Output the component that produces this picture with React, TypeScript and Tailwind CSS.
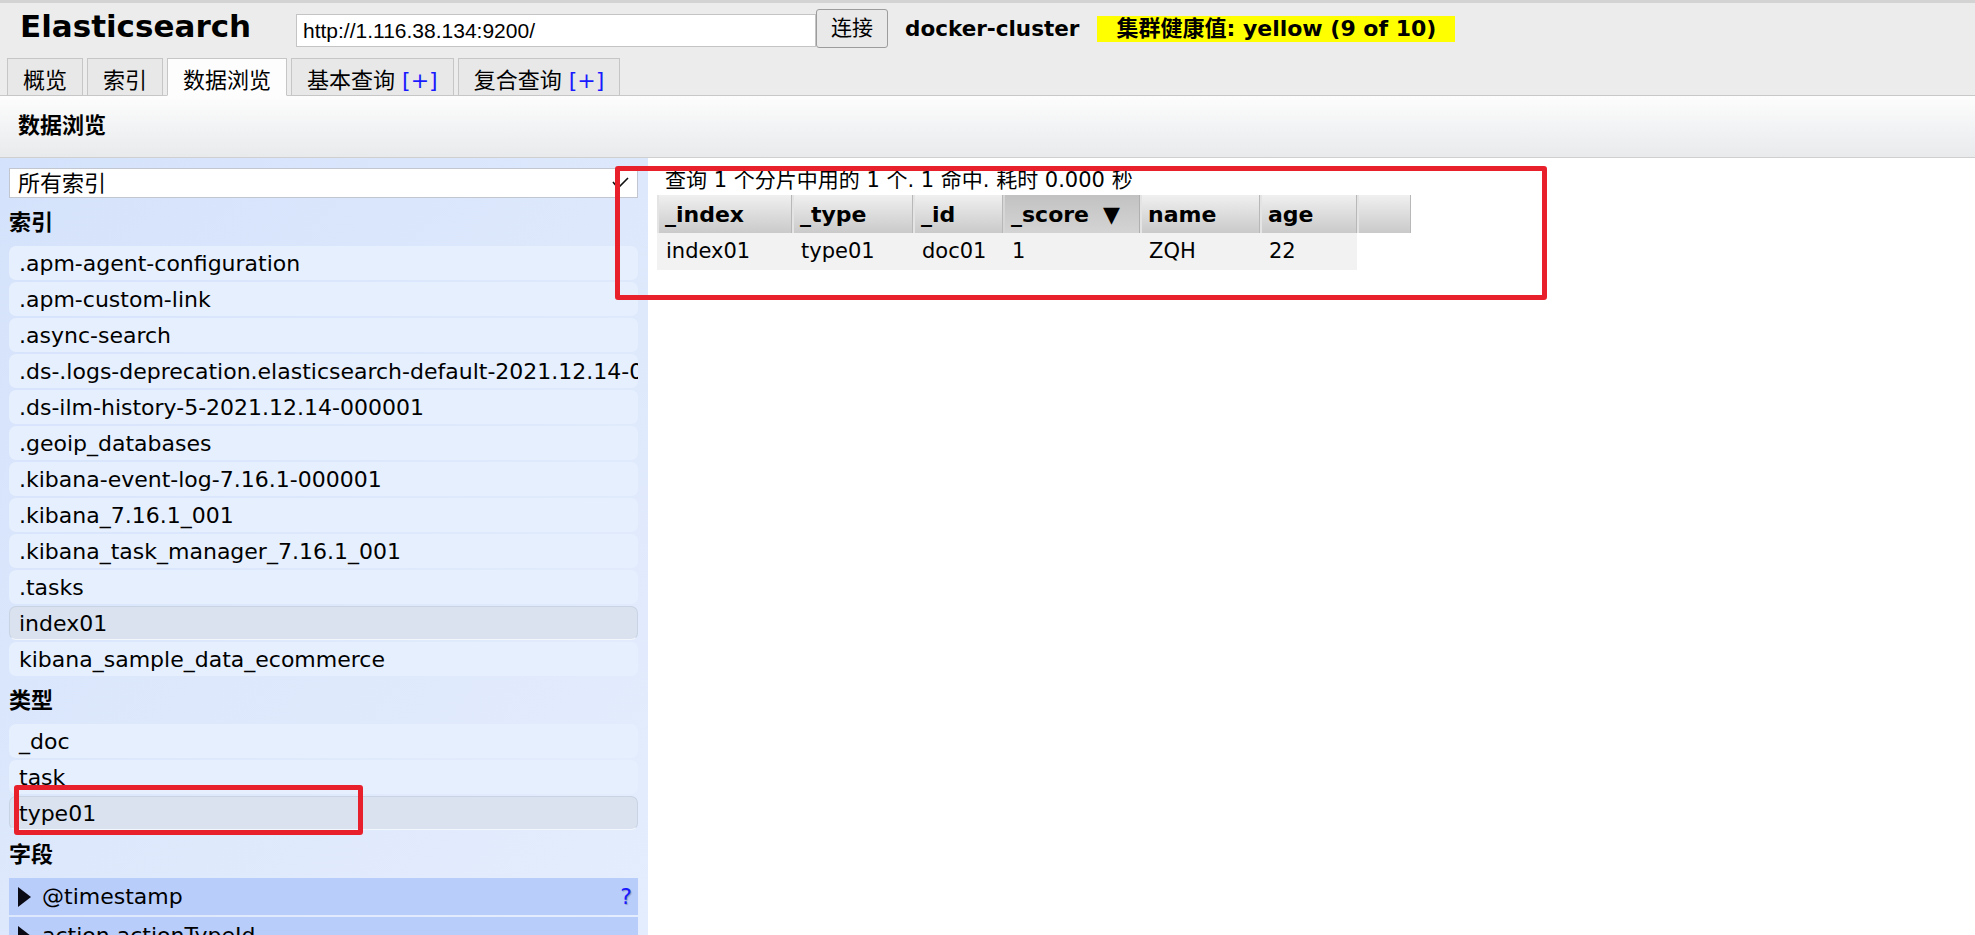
import React from "react";

const indices = [
  ".apm-agent-configuration",
  ".apm-custom-link",
  ".async-search",
  ".ds-.logs-deprecation.elasticsearch-default-2021.12.14-000001",
  ".ds-ilm-history-5-2021.12.14-000001",
  ".geoip_databases",
  ".kibana-event-log-7.16.1-000001",
  ".kibana_7.16.1_001",
  ".kibana_task_manager_7.16.1_001",
  ".tasks",
  "index01",
  "kibana_sample_data_ecommerce",
];

const types = ["_doc", "task", "type01"];

function Item({ label, selected }: { label: string; selected?: boolean }) {
  return (
    <div
      className={
        selected
          ? "h-[34px] shrink-0 rounded-[7px] bg-[#d9e2ee] border border-[#c8d3e3] border-b-[#f2f6fd] pl-[9px] flex items-center text-[22px] whitespace-nowrap overflow-hidden"
          : "h-[34px] shrink-0 rounded-[7px] bg-[#e6effd] pl-[10px] flex items-center text-[22px] whitespace-nowrap overflow-hidden"
      }
    >
      {label}
    </div>
  );
}

function Heading({ label }: { label: string }) {
  return <div className="h-[44px] shrink-0 flex items-center text-[22px] font-bold">{label}</div>;
}

function Field({ label, help }: { label: string; help?: boolean }) {
  return (
    <div className="h-[37px] shrink-0 bg-[#b9cdfb] flex items-center pl-[9px] pr-[6px]">
      <svg width="13" height="20" viewBox="0 0 13 20" className="shrink-0">
        <polygon points="0,0 13,10 0,20" fill="#0a0a14" />
      </svg>
      <span className="ml-[11px] text-[22px] whitespace-nowrap">{label}</span>
      {help && (
        <span className="ml-auto text-[22px] text-[#1a1aff] [text-shadow:1px_1px_1px_#8a9ac0]">?</span>
      )}
    </div>
  );
}

function Tab({ children, active }: { children: React.ReactNode; active?: boolean }) {
  return (
    <div
      className={
        active
          ? "h-[38px] -mb-px px-[15px] pt-[8px] leading-[28px] border border-[#c6c6c6] border-b-[#fdfdfd] bg-[#fdfdfd] text-[22px] whitespace-nowrap"
          : "h-[38px] -mb-px px-[15px] pt-[8px] leading-[28px] border border-[#c6c6c6] bg-[#e8e8e8] text-[22px] whitespace-nowrap"
      }
    >
      {children}
    </div>
  );
}

const headCell =
  "h-[38px] flex items-center pl-[6px] border-l-2 border-l-[#e4e4e4] border-r border-r-[#b8b8b8] bg-linear-to-b from-[#f0f0f0] to-[#cacaca] font-bold text-[22px] whitespace-nowrap";
const headCellSorted =
  "h-[38px] flex items-center pl-[6px] border-l-2 border-l-[#d6d6d6] border-r border-r-[#b0b0b0] bg-linear-to-b from-[#c2c2c2] to-[#d4d4d4] font-bold text-[22px] whitespace-nowrap";
const rowCell = "h-[37px] flex items-center pl-[9px] bg-[#f2f2f2] text-[21px] whitespace-nowrap";

export default function App() {
  return (
    <div className="relative w-full h-[935px] overflow-hidden bg-white text-black font-['DejaVu_Sans','Noto_Sans_CJK_SC',sans-serif]">
      {/* Header */}
      <div className="bg-[#ececec] border-t-[3px] border-[#d3d3d3]">
        <div className="flex h-[55px]">
          <div className="w-[296px] shrink-0 pl-[20px] mt-[5px] text-[31px] font-bold leading-[36px]">
            Elasticsearch
          </div>
          <div className="mt-[11px] w-[520px] h-[33px] shrink-0 border border-[#c4c4c4] bg-white pl-[6px] flex items-center font-['Liberation_Sans','Noto_Sans_CJK_SC',sans-serif] text-[21px]">
            http://1.116.38.134:9200/
          </div>
          <div className="mt-[6px] w-[72px] h-[39px] shrink-0 border border-[#9c9c9c] rounded-[3px] bg-[#e9e9e9] flex items-center justify-center text-[21px]">
            连接
          </div>
          <div className="ml-[17px] mt-[13px] h-[26px] leading-[26px] text-[21.5px] font-bold whitespace-nowrap">
            docker-cluster
          </div>
          <div className="ml-[18px] mt-[13px] h-[26px] leading-[26px] px-[19px] bg-[#ffff00] text-[22px] font-bold whitespace-nowrap">
            集群健康值: yellow (9 of 10)
          </div>
        </div>
        <div className="flex items-end gap-[4px] pl-[7px] h-[38px] border-b border-[#c8c8c8]">
          <Tab>概览</Tab>
          <Tab>索引</Tab>
          <Tab active>数据浏览</Tab>
          <Tab>
            基本查询 <span className="text-[#1a1aff]">[+]</span>
          </Tab>
          <Tab>
            复合查询 <span className="text-[#1a1aff]">[+]</span>
          </Tab>
        </div>
      </div>

      {/* Panel title bar */}
      <div className="h-[62px] border-b border-[#cfcfcf] bg-linear-to-b from-[#fdfdfd] to-[#e8eaec] flex items-center pl-[18px] pb-[2px] text-[22px] font-bold">
        数据浏览
      </div>

      {/* Main */}
      <div className="flex h-[777px]">
        <div className="w-[648px] shrink-0 bg-linear-to-br from-[#d4e2fb] via-[#dde8fc] to-[#e4edfd] pt-[10px] pl-[9px] pr-[10px] flex flex-col gap-[2px] overflow-hidden">
          <div className="h-[30px] shrink-0 border border-[#c2c7cf] bg-white flex items-center pl-[8px] pr-[8px] text-[22px]">
            <span>所有索引</span>
            <svg width="17" height="13" viewBox="0 0 17 13" className="ml-auto">
              <polyline points="1,5 6,11 16,1" fill="none" stroke="#111" strokeWidth="1.6" />
            </svg>
          </div>
          <Heading label="索引" />
          {indices.map((n) => (
            <Item key={n} label={n} selected={n === "index01"} />
          ))}
          <Heading label="类型" />
          {types.map((n) => (
            <Item key={n} label={n} selected={n === "type01"} />
          ))}
          <Heading label="字段" />
          <Field label="@timestamp" help />
          <Field label="action.actionTypeId" />
        </div>

        <div className="flex-1 pt-[8px] pl-[9px]">
          <div className="h-[29px] leading-[29px] pl-[8px] text-[21px] whitespace-nowrap">
            查询 1 个分片中用的 1 个. 1 命中. 耗时 0.000 秒
          </div>
          <div className="grid grid-cols-[135px_121px_90px_137px_120px_97px_54px] w-[754px]">
            <div className={headCell}>_index</div>
            <div className={headCell}>_type</div>
            <div className={headCell}>_id</div>
            <div className={headCellSorted}>
              _score<span className="ml-[14px]">▼</span>
            </div>
            <div className={headCell}>name</div>
            <div className={headCell}>age</div>
            <div className={headCell}></div>
            <div className={rowCell}>index01</div>
            <div className={rowCell}>type01</div>
            <div className={rowCell}>doc01</div>
            <div className={rowCell}>1</div>
            <div className={rowCell}>ZQH</div>
            <div className={rowCell}>22</div>
          </div>
        </div>
      </div>

      {/* Annotation boxes */}
      <div className="absolute left-[615px] top-[166px] w-[932px] h-[134px] border-[5px] border-[#e8202b] rounded-[3px]" />
      <div className="absolute left-[14px] top-[785px] w-[349px] h-[50px] border-[5px] border-[#e8202b] rounded-[3px]" />
    </div>
  );
}
